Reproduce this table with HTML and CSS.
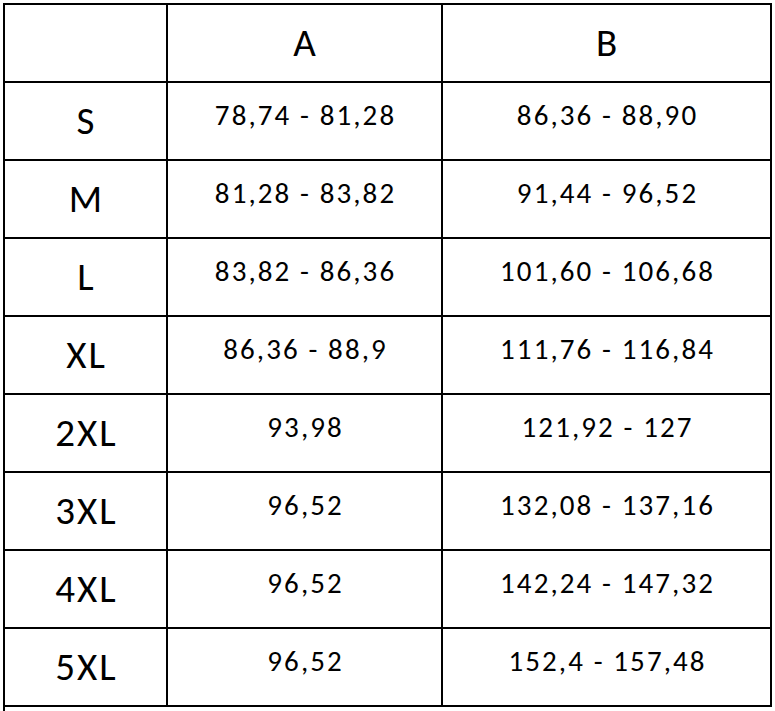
FILE: index.html
```html
<!DOCTYPE html>
<html>
<head>
<meta charset="utf-8">
<link rel="stylesheet" href="styles.css">
</head>
<body>
<div class="sizes">
  <div class="cell size"></div><div class="cell col">A</div><div class="cell col">B</div>
  <div class="cell size">S</div><div class="cell val">78,74 - 81,28</div><div class="cell val">86,36 - 88,90</div>
  <div class="cell size">M</div><div class="cell val">81,28 - 83,82</div><div class="cell val">91,44 - 96,52</div>
  <div class="cell size">L</div><div class="cell val">83,82 - 86,36</div><div class="cell val">101,60 - 106,68</div>
  <div class="cell size">XL</div><div class="cell val">86,36 - 88,9</div><div class="cell val">111,76 - 116,84</div>
  <div class="cell size">2XL</div><div class="cell val">93,98</div><div class="cell val">121,92 - 127</div>
  <div class="cell size">3XL</div><div class="cell val">96,52</div><div class="cell val">132,08 - 137,16</div>
  <div class="cell size">4XL</div><div class="cell val">96,52</div><div class="cell val">142,24 - 147,32</div>
  <div class="cell size">5XL</div><div class="cell val">96,52</div><div class="cell val">152,4 - 157,48</div>
  <div class="extra"></div>
</div>
</body>
</html>
```
FILE: styles.css
```css
html, body {
  margin: 0;
  padding: 0;
  background: #ffffff;
  overflow: hidden;
}
body {
  padding: 3px 0 0 3px;
  font-family: Carlito, Lato, "Liberation Sans", sans-serif;
  color: #000;
}
.sizes {
  display: grid;
  grid-template-columns: 163px 275px 329px;
  grid-auto-rows: 78px;
  width: max-content;
  border-left: 2px solid #000;
  border-top: 2px solid #000;
}
.cell {
  box-sizing: border-box;
  border-right: 2px solid #000;
  border-bottom: 2px solid #000;
  display: flex;
  align-items: center;
  justify-content: center;
  line-height: 1.2;
  white-space: nowrap;
}
.col {
  font-size: 39px;
  padding-top: 1px;
}
.size {
  font-size: 39px;
  letter-spacing: 2px;
  padding-left: 2px;
  padding-top: 1px;
}
.val {
  font-size: 29px;
  letter-spacing: 2.1px;
  padding-left: 2.1px;
  padding-bottom: 11px;
}
.extra {
  grid-column: 1 / -1;
}
```
